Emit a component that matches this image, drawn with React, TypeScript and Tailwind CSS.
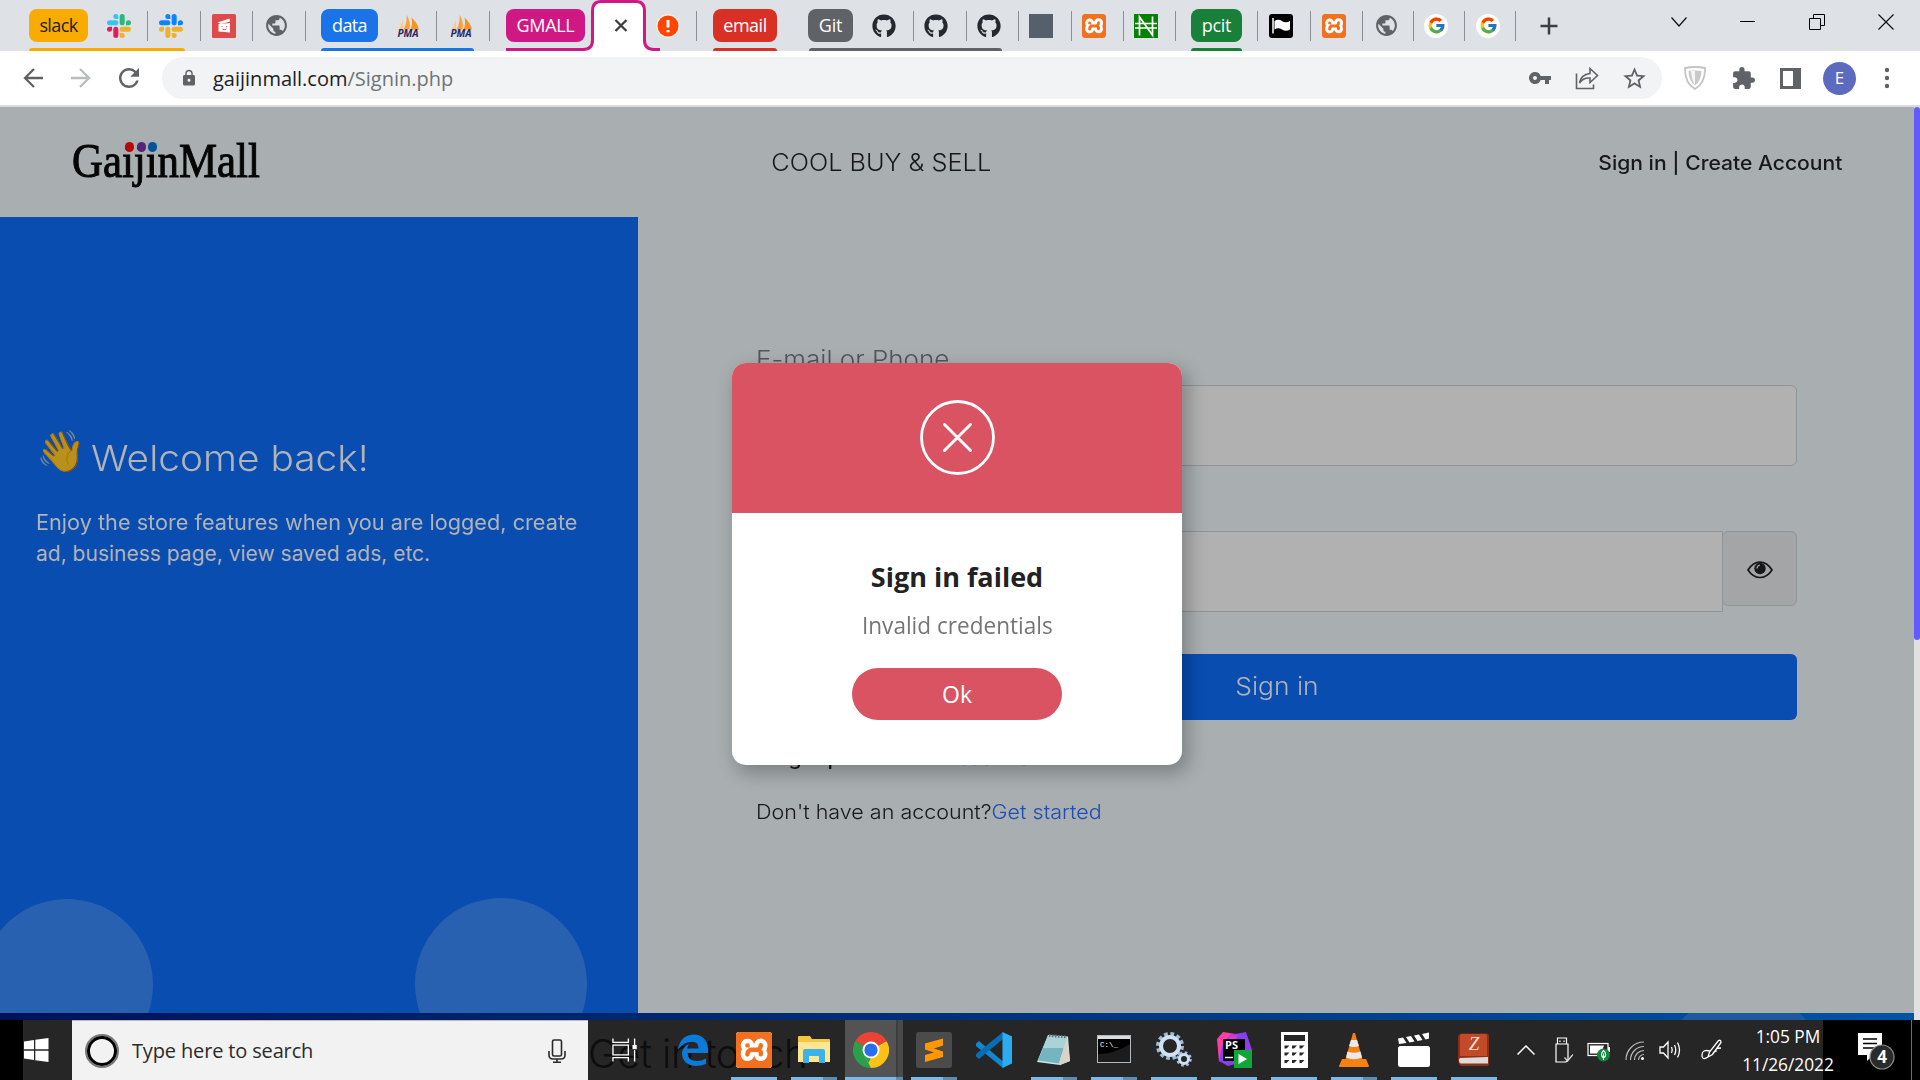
import React from "react";
import type { ReactNode } from "react";
import { FaGithub } from "react-icons/fa";
import { FcGoogle } from "react-icons/fc";
import { MdPublic, MdLock, MdVpnKey, MdStarBorder, MdExtension, MdRefresh } from "react-icons/md";
import { SiXampp } from "react-icons/si";

/* ---------- Tab strip ---------- */

function Slack({ a, b, c, d }: { a: string; b: string; c: string; d: string }) {
  return (
    <svg viewBox="0 0 122.8 122.8" className="h-6 w-6">
      <path d="M25.8 77.6a12.9 12.9 0 1 1-12.9-12.9h12.9zm6.5 0a12.9 12.9 0 0 1 25.8 0v32.3a12.9 12.9 0 0 1-25.8 0z" fill={d} />
      <path d="M45.2 25.8a12.9 12.9 0 1 1 12.9-12.9v12.9zm0 6.5a12.9 12.9 0 0 1 0 25.8H12.9a12.9 12.9 0 0 1 0-25.8z" fill={a} />
      <path d="M97 45.2a12.9 12.9 0 1 1 12.9 12.9H97zm-6.5 0a12.9 12.9 0 0 1-25.8 0V12.9a12.9 12.9 0 0 1 25.8 0z" fill={b} />
      <path d="M77.6 97a12.9 12.9 0 1 1-12.9 12.9V97zm0-6.5a12.9 12.9 0 0 1 0-25.8h32.3a12.9 12.9 0 0 1 0 25.8z" fill={c} />
    </svg>
  );
}

function Pma() {
  return (
    <svg viewBox="0 0 24 24" className="h-6 w-6 overflow-visible">
      <path d="M2 16.500Q6 10 6.500 5Q8 11 6.800 15.500Z" fill="#fbc98c" />
      <path d="M7.500 15.500Q11.500 8 10.500 0.500Q15 8 13.500 15.500Z" fill="#f9a13a" />
      <path d="M14.500 15.500Q17 10 15.500 3.500Q21.500 9 23 15.500Z" fill="#f7941e" />
      <text x="12" y="23.200" textAnchor="middle" fontFamily="Open Sans, sans-serif" fontSize="10" fontWeight="700" fontStyle="italic" fill="#2b2560">
        PMA
      </text>
    </svg>
  );
}

function Xampp({ className }: { className: string }) {
  return (
    <span className={"relative flex items-center justify-center overflow-hidden rounded-[3px] bg-white " + className}>
      <SiXampp className="h-full w-full scale-[1.02] text-[#f27020]" />
    </span>
  );
}

function Pill({ className, children }: { className: string; children: ReactNode }) {
  return (
    <span className={"flex h-[33px] shrink-0 items-center justify-center rounded-lg text-[18px] " + className}>
      {children}
    </span>
  );
}

function Sep({ className }: { className: string }) {
  return <span className={"h-[30px] w-px shrink-0 bg-[#8b8e93] " + className} />;
}

function Slot({ className, children }: { className: string; children: ReactNode }) {
  return <span className={"flex h-6 w-6 shrink-0 items-center justify-center " + className}>{children}</span>;
}

function TabStrip() {
  return (
    <div className="relative h-[51px] overflow-hidden bg-[#dee1e6]">
      <div className="flex h-[51px] items-center">
        <Pill className="ml-[29px] w-[59px] bg-[#f9ab00] tracking-[-0.6px] text-[#202124]">slack</Pill>
        <Slot className="ml-[19px]"><Slack a="#36c5f0" b="#2eb67d" c="#ecb22e" d="#e01e5a" /></Slot>
        <Sep className="ml-4" />
        <Slot className="ml-[11px]"><Slack a="#0a84ff" b="#0a84ff" c="#ecb22e" d="#ecb22e" /></Slot>
        <Sep className="ml-[17px]" />
        <Slot className="ml-[11px]">
          <svg viewBox="0 0 24 24" className="h-6 w-6">
            <rect width="24" height="24" rx="1.500" fill="#dc4a4a" />
            <path d="M5.500 8.500L17.500 4.500L18 7.500L9 10Z" fill="#fff" />
            <path d="M6.500 10L18 9V18.500L6.500 17.500Z" fill="#fff" />
            <path d="M9.500 12.700h1M14 12.700h1M10.500 15q2 1.500 4 0" stroke="#dc4a4a" strokeWidth="1" fill="none" />
          </svg>
        </Slot>
        <Sep className="ml-4" />
        <Slot className="ml-[11px]"><MdPublic className="h-[25px] w-[25px] shrink-0 text-[#5f6368]" /></Slot>
        <Sep className="ml-[17px]" />
        <Pill className="ml-[15px] w-[57px] bg-[#1a73e8] tracking-[-0.6px] text-white">data</Pill>
        <Slot className="ml-[18px]"><Pma /></Slot>
        <Sep className="ml-4" />
        <Slot className="ml-[12px]"><Pma /></Slot>
        <Sep className="ml-4" />
        <Pill className="ml-4 w-[79px] bg-[#d01884] tracking-[-0.3px] text-white">GMALL</Pill>
        <Slot className="ml-[71px]">
          <svg viewBox="0 0 24 24" className="h-6 w-6">
            <circle cx="12" cy="12" r="12" fill="#f6ecea" />
            <circle cx="12" cy="12" r="10.500" fill="#ff4500" />
            <path d="M12 6v7.500M12 16v2.200" stroke="#fff" strokeWidth="3" />
          </svg>
        </Slot>
        <Sep className="ml-4" />
        <Pill className="ml-4 w-[64px] bg-[#d93025] tracking-[-0.5px] text-white">email</Pill>
        <Pill className="ml-[31px] w-[45px] bg-[#5f6368] tracking-[-0.2px] text-white">Git</Pill>
        <Slot className="ml-[19px]"><FaGithub className="h-6 w-6 text-[#24292f]" /></Slot>
        <Sep className="ml-[17px]" />
        <Slot className="ml-[10px]"><FaGithub className="h-6 w-6 text-[#24292f]" /></Slot>
        <Sep className="ml-[18px]" />
        <Slot className="ml-[10px]"><FaGithub className="h-6 w-6 text-[#24292f]" /></Slot>
        <Sep className="ml-[17px]" />
        <Slot className="ml-[10px]"><span className="h-6 w-6 bg-[#56606c]" /></Slot>
        <Sep className="ml-[18px]" />
        <Slot className="ml-[10px]"><Xampp className="h-6 w-6" /></Slot>
        <Sep className="ml-[17px]" />
        <Slot className="ml-[10px]">
          <svg viewBox="0 0 24 24" className="h-6 w-6">
            <rect width="24" height="24" fill="#068106" />
            <path d="M5.500 21.500V3L18.500 21V2.500M1 9.500H23M1 14H23" stroke="#fff" strokeWidth="1.700" fill="none" />
          </svg>
        </Slot>
        <Sep className="ml-[17px]" />
        <Pill className="ml-[15px] w-[51px] bg-[#188038] tracking-[-0.3px] text-white">pcit</Pill>
        <Sep className="ml-[15px]" />
        <Slot className="ml-[11px]">
          <svg viewBox="0 0 24 24" className="h-6 w-6">
            <rect width="24" height="24" rx="3" fill="#000" />
            <path d="M4 4V19.500" stroke="#fff" strokeWidth="1.500" />
            <path d="M5.500 7Q9.500 4.500 13 7T21 7V15.500Q17 18 13 15.500T5.500 15.500Z" fill="#fff" />
          </svg>
        </Slot>
        <Sep className="ml-[17px]" />
        <Slot className="ml-[11px]"><Xampp className="h-6 w-6" /></Slot>
        <Sep className="ml-4" />
        <Slot className="ml-[11px]"><MdPublic className="h-[25px] w-[25px] shrink-0 text-[#5f6368]" /></Slot>
        <Sep className="ml-[15px]" />
        <Slot className="ml-[10px] rounded-full bg-white"><FcGoogle className="h-[19px] w-[19px]" /></Slot>
        <Sep className="ml-4" />
        <Slot className="ml-[11px] rounded-full bg-white"><FcGoogle className="h-[19px] w-[19px]" /></Slot>
        <Sep className="ml-[15px]" />
        <svg viewBox="0 0 20 20" className="ml-[23px] h-5 w-5 shrink-0"><path d="M10 1.500V18.500M1.500 10H18.500" stroke="#3c4043" strokeWidth="2.500" /></svg>
        <svg viewBox="0 0 16 10" className="mb-2 ml-[112px] h-[10px] w-4 shrink-0"><path d="M0.500 0.500L8 9L15.500 0.500" stroke="#111" strokeWidth="1.200" fill="none" /></svg>
        <span className="mb-2 ml-[53px] h-px w-[15px] shrink-0 bg-black" />
        <svg viewBox="0 0 16 16" className="mb-2 ml-[54px] h-4 w-4 shrink-0" fill="none" stroke="#000" strokeWidth="1"><path d="M0.500 4.500h11v11h-11zM4.500 4.500v-4h11v11h-4" /></svg>
        <svg viewBox="0 0 16 16" className="mb-2 ml-[53px] h-4 w-4 shrink-0" stroke="#111" strokeWidth="1.200"><path d="M0.500 0.500L15.500 15.500M15.500 0.500L0.500 15.500" /></svg>
      </div>
      <span className="absolute bottom-0 left-[29px] h-[3px] w-[156px] rounded-t bg-[#f9ab00]" />
      <span className="absolute bottom-0 left-[321px] h-[3px] w-[153px] rounded-t bg-[#1a73e8]" />
      <span className="absolute bottom-0 left-[713px] h-[3px] w-[64px] rounded-t bg-[#d93025]" />
      <span className="absolute bottom-0 left-[809px] h-[3px] w-[193px] rounded-t bg-[#5f6368]" />
      <span className="absolute bottom-0 left-[1191px] h-[3px] w-[51px] rounded-t bg-[#188038]" />
      {/* active tab */}
      <svg viewBox="0 0 156 51" className="absolute left-[506px] top-0 h-[51px] w-[156px]">
        <path d="M78 51Q86.500 50 86.500 40V11Q86.500 1.500 95 1.500H130Q138.500 1.500 138.500 11V40Q138.500 50 147 51Z" fill="#fff" />
        <path d="M0 49.500H77Q86.500 49.500 86.500 40V11Q86.500 1.500 95 1.500H130Q138.500 1.500 138.500 11V40Q138.500 49.500 148 49.500H154" fill="none" stroke="#d01884" strokeWidth="3" />
        <path d="M109.500 20L120.500 31M120.500 20L109.500 31" stroke="#3c4043" strokeWidth="2.300" />
      </svg>
    </div>
  );
}

/* ---------- Toolbar ---------- */

function Toolbar() {
  return (
    <div className="flex h-14 items-center border-b-2 border-[#dadcdf] bg-white">
      <svg viewBox="0 0 20 20" className="ml-[23px] h-5 w-5" fill="none" stroke="#5f6368" strokeWidth="2.300"><path d="M20 10H2M11 1L2 10L11 19" /></svg>
      <svg viewBox="0 0 20 20" className="ml-[28px] h-5 w-5" fill="none" stroke="#babcbe" strokeWidth="2.300"><path d="M0 10H18M9 1L18 10L9 19" /></svg>
      <MdRefresh className="ml-[23px] h-[30px] w-[30px] text-[#5f6368]" />
      <div className="ml-[18px] flex h-[42px] w-[1500px] items-center rounded-full bg-[#f1f3f4]">
        <MdLock className="ml-[18px] h-[18px] w-[18px] text-[#5f6368]" />
        <span className="ml-[15px] pt-[2px] text-[20px] leading-none text-[#202124]">
          gaijinmall.com<span className="text-[#6f7377]">/Signin.php</span>
        </span>
        <MdVpnKey className="ml-auto h-6 w-6 text-[#5f6368]" />
        <svg viewBox="0 0 24 24" className="ml-[23px] h-6 w-6" fill="none" stroke="#5f6368" strokeWidth="1.600">
          <path d="M1.500 7.500V22.500H18.500V18.500" />
          <path d="M4.500 17Q6 8.500 15 7.500V2.500L22.500 9.500L15 16.500V12Q8 11.500 4.500 17Z" />
        </svg>
        <MdStarBorder className="ml-[22px] mr-[14px] h-[27px] w-[27px] text-[#5f6368]" />
      </div>
      <svg viewBox="0 0 22 24" className="ml-[22px] h-6 w-[22px]">
        <path d="M11 1Q16 1 21 2Q21.500 17 11 23Q0.500 17 1 2Q6 1 11 1Z" fill="#fff" stroke="#c4c4c4" strokeWidth="1.800" />
        <path d="M11 4.500Q15 4.500 17.500 5Q17.500 14.500 11 19.500Q4.500 14.500 4.500 5Q7 4.500 11 4.500Z" fill="#c9c9c9" />
        <path d="M11 5V19Q7.500 14 7 5Z" fill="#f5f5f5" />
      </svg>
      <MdExtension className="ml-[25px] h-[25px] w-[25px] text-[#5f6368]" />
      <svg viewBox="0 0 21 21" className="ml-6 h-[21px] w-[21px]"><path d="M1.500 1.500H19.500V19.500H1.500Z" fill="none" stroke="#5f6368" strokeWidth="3" /><path d="M13 1H20V20H13Z" fill="#5f6368" /></svg>
      <span className="ml-[22px] flex h-[33px] w-[33px] items-center justify-center rounded-full bg-[#5c6bc0] text-[17px] text-white">E</span>
      <svg viewBox="0 0 6 22" className="ml-[28px] h-[22px] w-[6px]" fill="#5f6368"><circle cx="3" cy="3" r="2.200" /><circle cx="3" cy="11" r="2.200" /><circle cx="3" cy="19" r="2.200" /></svg>
    </div>
  );
}

/* ---------- Page ---------- */

function Header() {
  return (
    <header className="flex h-[110px] items-center justify-between pl-[73px] pr-[72px] font-[Inter,sans-serif] text-[#15191c]">
      <div className="relative h-[52px] w-[240px]">
        <span className="absolute left-[-1px] top-[-1px] origin-left scale-x-[0.892] whitespace-nowrap font-['Liberation_Serif',serif] text-[48px] leading-[52px] text-[#050505] [-webkit-text-stroke:1px_#050505]">
          GaijinMall
        </span>
        <span className="absolute left-[52px] top-[6px] h-[10px] w-[9px] rounded-full bg-[#b50a0a]" />
        <span className="absolute left-[64px] top-[6px] h-[10px] w-[9px] rounded-full bg-[#55257c]" />
        <span className="absolute left-[75px] top-[6px] h-[10px] w-[9px] rounded-full bg-[#07539a]" />
      </div>
      <span className="-ml-[161px] mt-px scale-x-[1.055] whitespace-nowrap text-[24px] font-light">COOL BUY &amp; SELL</span>
      <span className="mt-px origin-right scale-x-[1.055] whitespace-nowrap text-[20px] font-medium">Sign in | Create Account</span>
    </header>
  );
}

function Welcome() {
  return (
    <aside className="relative h-[796px] w-[638px] shrink-0 overflow-hidden bg-[#094db1] pl-9 pt-[206px] font-[Inter,sans-serif] text-[#b1b3b6]">
      <div className="flex h-[60px] items-start">
        <span className="w-[55px] shrink-0 text-[40px] leading-[56px] brightness-[0.72]">👋</span>
        <span className="origin-left scale-x-[1.08] whitespace-nowrap pt-[13px] text-[36px] font-[350] leading-[44px]">Welcome back!</span>
      </div>
      <p className="mt-[24px] whitespace-nowrap text-[21px] leading-[31px]">
        <span className="inline-block origin-left scale-x-[1.033]">Enjoy the store features when you are logged, create</span>
        <br />
        <span>ad, business page, view saved ads, etc.</span>
      </p>
      <span className="absolute left-[-19px] top-[682px] h-[172px] w-[172px] rounded-full bg-[#2961b1]" />
      <span className="absolute left-[415px] top-[681px] h-[172px] w-[172px] rounded-full bg-[#2961b1]" />
    </aside>
  );
}

function Eye() {
  return (
    <svg viewBox="0 0 26 18" className="mt-[2px] h-[18px] w-[26px]">
      <path d="M1 9Q6 1.200 13 1.200T25 9Q20 16.500 13 16.500T1 9Z" fill="none" stroke="#16191b" strokeWidth="1.700" />
      <circle cx="13" cy="7.500" r="5.700" fill="#16191b" />
      <path d="M10 7.500Q10 4.500 13 4" fill="none" stroke="#a5a6a8" strokeWidth="1.200" />
    </svg>
  );
}

function SignInForm() {
  return (
    <main className="flex-1 pl-[118px] pr-[117px] pt-[128px] font-[Inter,sans-serif]">
      <div className="h-[29px] w-max origin-left scale-x-[1.085] text-[24px] font-light leading-[29px] text-[#50565a]">E-mail or Phone</div>
      <div className="mt-[11px] h-[81px] rounded-md border border-[#8f9498] bg-[#b1b1b1]" />
      <div className="mt-[65px] flex h-[81px] items-start">
        <div className="h-[81px] flex-1 rounded-l-md border border-[#8f9498] bg-[#b1b1b1]" />
        <div className="-ml-px flex h-[75px] w-[75px] items-center justify-center rounded-md border border-[#8f9498] bg-[#a4a5a7]">
          <Eye />
        </div>
      </div>
      <div className="mt-[42px] flex h-[66px] items-center justify-center rounded-md bg-[#094db1] text-[24px] font-[350] text-[#b1b3b6]">
        <span className="scale-x-[1.1]">Sign in</span>
      </div>
      <div className="mt-[26px] h-6 w-max origin-left scale-x-[1.065] text-[20px] leading-6 text-[#15191c]">
        <span className="font-medium">Forgot password?</span> <span className="font-light text-[#1a4fb0]">Reset now</span>
      </div>
      <div className="mt-[30px] h-6 w-max origin-left scale-x-[1.076] whitespace-nowrap text-[20px] font-light leading-6 text-[#15191c]">
        Don't have an account?<span className="text-[#1f4cb5]">Get started</span>
      </div>
    </main>
  );
}

function Modal() {
  return (
    <div className="absolute left-[732px] top-[363px] flex h-[402px] w-[450px] flex-col items-center overflow-hidden rounded-[14px] bg-white">
      <div className="flex h-[150px] w-full items-center justify-center bg-[#d95362]">
        <svg viewBox="0 0 75 75" className="mb-[2px] h-[75px] w-[75px]" fill="none" stroke="#fff" strokeWidth="3" strokeLinecap="round">
          <circle cx="37.500" cy="37.500" r="36" strokeWidth="2.800" />
          <path d="M24.500 24.500L50.500 50.500M50.500 24.500L24.500 50.500" />
        </svg>
      </div>
      <h2 className="mt-[45px] text-[27px] font-bold leading-[37px] text-[#222]">Sign in failed</h2>
      <p className="mt-[15px] scale-x-[0.96] whitespace-nowrap text-[23.500px] leading-[31px] text-[#757575]">Invalid credentials</p>
      <button className="mt-[27px] h-[52px] w-[210px] rounded-full bg-[#d95362] text-[23px] font-medium text-white">Ok</button>
    </div>
  );
}

/* ---------- Taskbar ---------- */

function App60({ active, split, running = true, children }: { active?: boolean; split?: boolean; running?: boolean; children: ReactNode }) {
  return (
    <div className={"relative flex h-[60px] w-[60px] shrink-0 items-center justify-center " + (active ? "bg-[linear-gradient(90deg,#262626_1px,#535353_1px_52px,#3d3d3d_52px_54px,#4a4a4a_54px_59px,#262626_59px)]" : "")}>
      {children}
      {running && (
        <span className={"absolute bottom-0 flex h-[3px] bg-[#76b9ed] " + (active ? "left-px w-[58px]" : "left-[7px] w-[46px]")}>
          {split && <span className="ml-auto h-full w-[14px] bg-[#5b8db3]" />}
          {active && <span className="ml-auto h-full w-[7px] bg-[#5b8db3]" />}
        </span>
      )}
    </div>
  );
}

function TaskIcons() {
  return (
    <div className="ml-[27px] flex h-[60px]">
      <App60 running={false}>
        <svg viewBox="0 0 32 32" className="mr-[2px] h-8 w-8"><path d="M1 15.500Q3 1.500 16.500 0.500Q30 1 31 15V19H10.500Q11 27 20 27Q25 27 29 24.500V30Q24 32 18.500 32Q6 31 5 20Q5 13 12 10Q10.500 12 10.300 14.500H21.500Q21.500 8 15.500 7.700Q6 8 1 15.500Z" fill="#0b7bdb" /></svg>
      </App60>
      <App60><Xampp className="h-9 w-9" /></App60>
      <App60 split>
        <svg viewBox="0 0 34 28" className="h-7 w-[34px]">
          <path d="M1 1Q1 0 2 0H13L15 3H32Q33 3 33 4V26H1Z" fill="#f6c540" />
          <path d="M1 6H33V26H1Z" fill="#ffe694" />
          <path d="M6 27V15Q6 13 8 13H26Q28 13 28 15V27H22V20H12V27Z" fill="#3bb3e8" />
        </svg>
      </App60>
      <App60 active>
        <svg viewBox="0 0 48 48" className="mr-[6px] h-9 w-9">
          <path d="M24 24L3.200 12A24 24 0 0 1 44.800 12Z" fill="#ea4335" />
          <path d="M24 24L24 48A24 24 0 0 1 3.200 12Z" fill="#2c9f4b" />
          <path d="M24 24L44.800 12A24 24 0 0 1 24 48Z" fill="#fbc116" />
          <path d="M24 13H45.300L44.800 12Z" fill="#ea4335" />
          <path d="M14.500 29.500L24 48L33.500 29.500Z" fill="#fbc116" />
          <path d="M14.500 29.500L3.200 12L12 24Q12 28 14.500 29.500L24 35L20.500 41Z" fill="#2c9f4b" />
          <circle cx="24" cy="24" r="11.300" fill="#fff" /><circle cx="24" cy="24" r="8.800" fill="#2a6ef0" />
        </svg>
      </App60>
      <App60 split>
        <svg viewBox="0 0 36 36" className="h-9 w-9"><rect width="36" height="36" rx="3" fill="#4b4b4b" /><path d="M9 11.500L27 6.500V13.500L18 16.500L27 19.500V25L9 30V23L18 20.500L9 17.500Z" fill="#ff9800" /></svg>
      </App60>
      <App60 running={false}>
        <svg viewBox="0 0 36 36" className="h-9 w-9"><path d="M0 11.500L3 9L27 29.500V36L0 14Z" fill="#1485cf" /><path d="M0 24.500L3 27L27 7V0L0 22Z" fill="#0a6db3" /><path d="M26.500 0L36 4.500V31.500L26.500 36Z" fill="#2aabf2" /></svg>
      </App60>
      <App60 split>
        <svg viewBox="0 0 34 32" className="h-8 w-[34px]"><path d="M11 1L31 2.500L33 27L23 31L0 28Z" fill="#cfe5e8" /><path d="M11 2L30 3.500L22 29.500L1 26.500Z" fill="#75b5bf" /><path d="M11 2L30 3.500L27 14L6 14Z" fill="#aad3d8" /><path d="M12 1.500L30 3" stroke="#5d7378" strokeWidth="3" strokeDasharray="1.500 1.500" /><path d="M30 3.500L33 27L23 31L22 29.500Z" fill="#d8d3c6" /></svg>
      </App60>
      <App60 split>
        <svg viewBox="0 0 34 28" className="mb-[2px] h-7 w-[34px]">
          <rect x="0.500" y="0.500" width="33" height="27" fill="#000" stroke="#b4b8bd" />
          <path d="M1 1H33V4H1Z" fill="#d9dde2" />
          <text x="3" y="12" fontFamily="Liberation Mono, monospace" fontSize="7.500" fill="#fff">C:\_</text>
          <path d="M1 19Q18 19 33 9V27H1Z" fill="#1c1c1c" />
        </svg>
      </App60>
      <App60>
        <svg viewBox="0 0 36 36" className="h-9 w-9" fill="none">
          <circle cx="14" cy="14" r="11.700" stroke="#9fbdd8" strokeWidth="4.500" strokeDasharray="3.600 2.525" />
          <circle cx="14" cy="14" r="9" stroke="#cfe1f2" strokeWidth="4" />
          <circle cx="28" cy="27" r="6.300" stroke="#9fbdd8" strokeWidth="3" strokeDasharray="2.500 2.440" />
          <circle cx="28" cy="27" r="4.500" stroke="#cfe1f2" strokeWidth="3" />
        </svg>
      </App60>
      <App60>
        <svg viewBox="0 0 36 36" className="h-9 w-9">
          <path d="M1 7L7 0L20 2L14 20L3 30Z" fill="#fb3fa6" /><path d="M14 3L30 0L36 18L30 29L12 34L3 29L6 14Z" fill="#8d3df0" /><path d="M14 4L22 2L18 12L8 12Z" fill="#d63bd0" />
          <rect x="7" y="7" width="22" height="22" fill="#000" />
          <text x="9" y="17" fontFamily="Open Sans, sans-serif" fontSize="11" fontWeight="700" fill="#fff">PS</text>
          <path d="M9 25.500H17" stroke="#fff" strokeWidth="1.500" />
          <rect x="18" y="18" width="18" height="18" fill="#11a63a" /><path d="M22.500 22L31 27L22.500 32Z" fill="#fff" />
        </svg>
      </App60>
      <App60>
        <svg viewBox="0 0 27 36" className="h-9 w-[27px]">
          <rect width="27" height="36" fill="#fff" /><rect x="3" y="3" width="21" height="6" fill="#262626" />
          <path d="M3.500 13.500H8.500L5.500 16.500H3.500ZM11 13.500H16L13 16.500H11ZM18.500 13.500H23.500L20.500 16.500H18.500ZM3.500 20.500H8.500L5.500 23.500H3.500ZM11 20.500H16L13 23.500H11ZM18.500 20.500H23.500L20.500 23.500H18.500ZM3.500 28H8.500L5.500 31H3.500ZM11 28H16L13 31H11ZM18.500 28H23.500L20.500 31H18.500Z" fill="#262626" />
        </svg>
      </App60>
      <App60 split>
        <svg viewBox="0 0 30 36" className="h-9 w-[30px]">
          <path d="M3 27H27L30 34Q30 35 29 35H1Q0 35 0 34Z" fill="#f58210" />
          <path d="M14 1H16L24 29Q15 33 6 29Z" fill="#f58210" />
          <path d="M12 8H18L20 14Q15 16 10 14ZM8.500 19.500Q15 22 21.500 19.500L23 25.500Q15 29 7 25.500Z" fill="#e9e9e9" />
        </svg>
      </App60>
      <App60>
        <svg viewBox="0 0 32 36" className="h-9 w-8"><rect y="14" width="32" height="21" rx="2.500" fill="#fff" /><path d="M0 6.500L5 5.500L8.500 11L1 12ZM8 5L13 4L16.500 9.500L11.500 10.500ZM16 3.500L21 2.500L24.500 8L19.500 9ZM24 2L31 0.500V6.500L27.500 7.500Z" fill="#fff" /></svg>
      </App60>
      <App60>
        <svg viewBox="0 0 32 34" className="h-[34px] w-8">
          <path d="M3 0.500H29Q31 0.500 31 3V31Q31 33 29 33H4Q1 33 0 28V5Q0 1 3 0.500Z" fill="#8f2f15" />
          <path d="M4 1H27Q29 1 29 3V23H2V3Q2 1 4 1Z" fill="#c14a28" />
          <path d="M2 25Q1 25 1 27.500T3 30.500H30V24Z" fill="#dcdcdc" />
          <text x="16" y="17" textAnchor="middle" fontFamily="Liberation Serif, serif" fontSize="19" fontStyle="italic" fill="#f4ded6">Z</text>
        </svg>
      </App60>
    </div>
  );
}

function Tray() {
  return (
    <>
      <svg viewBox="0 0 18 10" className="ml-[13px] h-[10px] w-[18px]" fill="none" stroke="#fff" strokeWidth="1.500"><path d="M0.500 9.500L9 1L17.500 9.500" /></svg>
      <svg viewBox="0 0 18 26" className="ml-5 h-[26px] w-[18px]" fill="none" stroke="#fff" strokeWidth="1.200"><path d="M2.500 7V1H11.500V7M1 7H13V23L11 25H1ZM5 3.500V5M9 3.500V5" /><path d="M9.500 20.500L12.500 24L18 17.500" stroke="#ddd" /></svg>
      <svg viewBox="0 0 24 20" className="ml-[14px] mt-[3px] h-5 w-6"><rect x="1" y="1.500" width="20" height="12" fill="#262626" stroke="#fff" strokeWidth="1.200" /><path d="M3 3.500H17L14 11.500H3ZM21 5H23V10H21Z" fill="#fff" /><circle cx="16.500" cy="13" r="6.500" fill="#12843c" /><path d="M16.500 8.500Q21 12.500 16.500 16Q12.500 12.500 16.500 8.500ZM16.500 11.500V18" fill="none" stroke="#fff" strokeWidth="1.100" /></svg>
      <svg viewBox="0 0 20 20" className="ml-[14px] mt-[2px] h-5 w-5" fill="none" stroke="#bbb" strokeWidth="1.200"><path d="M1 19A18 18 0 0 1 19 1M5.500 19A13.500 13.500 0 0 1 19 5.500M9.500 19A9.500 9.500 0 0 1 19 9.500M13.500 19A5.500 5.500 0 0 1 19 13.500" /><circle cx="17.500" cy="17.500" r="1.500" fill="#fff" stroke="none" /></svg>
      <svg viewBox="0 0 24 20" className="ml-[14px] h-5 w-6" fill="none" stroke="#fff" strokeWidth="1.300"><path d="M1 7H4.500L9 2V18L4.500 13H1Z" /><path d="M12.500 7Q14 10 12.500 13M15.500 5Q18 10 15.500 15M18.500 2.500Q22.500 10 18.500 17.500" /></svg>
      <svg viewBox="0 0 22 22" className="ml-[18px] h-[22px] w-[22px]" fill="none" stroke="#fff" strokeWidth="1.300"><path d="M7 18L8.500 13L17.500 1.500Q20 0.500 20 3.500L11.500 15.500ZM9 12Q1 10 1 16T7 18M11.500 15.500Q13 12 15 12Q14 9 20 9" /></svg>
    </>
  );
}

function Taskbar() {
  return (
    <div className="relative flex h-[60px] w-[1920px] items-center overflow-hidden bg-[#262626]">
      <span className="absolute left-0 top-0 h-[60px] w-[23px] bg-black" />
      <span className="absolute right-0 top-0 h-[60px] w-[97px] bg-black" />
      <span className="absolute left-[588px] top-[10px] whitespace-nowrap font-[Inter,sans-serif] text-[40px] font-light leading-[48px] tracking-[-0.5px] text-[#0d0d0d]">Get in touch</span>
      <div className="relative flex h-[60px] w-full items-center">
        <svg viewBox="0 0 25 24" className="ml-6 h-6 w-[25px] shrink-0" fill="#fff"><path d="M0 3.500L10 2V11.300H0ZM11.300 1.800L24.500 0V11.300H11.300ZM0 12.700H10V22L0 20.500ZM11.300 12.700H24.500V24L11.300 22.200Z" /></svg>
        <div className="ml-[23px] flex h-[60px] w-[516px] shrink-0 items-center border-t border-[#b9babd] bg-[#f2f2f2]">
          <span className="ml-[13px] h-[34px] w-[34px] shrink-0 rounded-full border-2 border-[#777] p-0"><span className="block h-full w-full rounded-full border-[3px] border-black" /></span>
          <span className="ml-[13px] pt-px text-[20px] tracking-[-0.15px] text-[#2b2b2b]">Type here to search</span>
          <svg viewBox="0 0 18 24" className="ml-auto mr-[22px] h-6 w-[18px]" fill="none" stroke="#2b2b2b" strokeWidth="1.600"><rect x="4.500" y="1" width="9" height="16" rx="1.500" /><path d="M1 12V16Q1 20 5 20H13Q17 20 17 16V12M9 20V23M5 23.200H13" /></svg>
        </div>
        <svg viewBox="0 0 26 24" className="ml-6 h-6 w-[25px] shrink-0" fill="none" stroke="#fff" strokeWidth="1.400"><path d="M1 0V4H17V0M1 7H17V17H1ZM1 24V20H17V24M23.500 0V7M23.500 12V24" /><path d="M22 7.500H25V10.500H22Z" fill="#fff" /></svg>
        <TaskIcons />
        <Tray />
        <div className="ml-[18px] flex w-[94px] flex-col items-center pt-px text-[17.300px] leading-[28px] text-white">
          <span>1:05 PM</span>
          <span>11/26/2022</span>
        </div>
        <svg viewBox="0 0 37 37" className="ml-[23px] mt-[3px] h-[37px] w-[37px] shrink-0">
          <path d="M0 0H24V22H15L9 28V22H0Z" fill="#fff" /><path d="M5 6H19M5 10.500H19M5 15H19" stroke="#000" strokeWidth="1.500" />
          <circle cx="24" cy="24" r="12" fill="#2b2b2b" stroke="#8a8a8a" strokeWidth="1.200" />
          <text x="24" y="30" textAnchor="middle" fontFamily="Open Sans, sans-serif" fontSize="17" fontWeight="700" fill="#fff">4</text>
        </svg>
        <span className="ml-[16px] h-[60px] w-px bg-[#6b6b6b]" />
      </div>
    </div>
  );
}

export default function App() {
  return (
    <div className="relative h-[1080px] w-[1920px] overflow-hidden bg-[#a9afb1] font-['Open_Sans',sans-serif]">
      <TabStrip />
      <Toolbar />
      <div className="flex h-[913px]">
        <div className="w-[1914px]">
          <Header />
          <div className="flex h-[796px]">
            <Welcome />
            <SignInForm />
          </div>
          <div className="relative h-[7px] overflow-hidden bg-[linear-gradient(90deg,#001257,#002a72_38%,#0054a4)]">
            <span className="absolute left-[1658px] top-[-20px] h-[172px] w-[172px] rounded-full bg-[#1d5aa0]" />
          </div>
        </div>
        <div className="w-[6px] bg-[#e1e1e1]">
          <div className="h-[533px] rounded-full bg-[#635bff]" />
        </div>
      </div>
      <Taskbar />
      <div className="absolute left-[732px] top-[363px] h-[402px] w-[450px] rounded-[14px] shadow-[5px_7px_18px_2px_rgba(0,0,0,0.25)]" />
      <Modal />
    </div>
  );
}
